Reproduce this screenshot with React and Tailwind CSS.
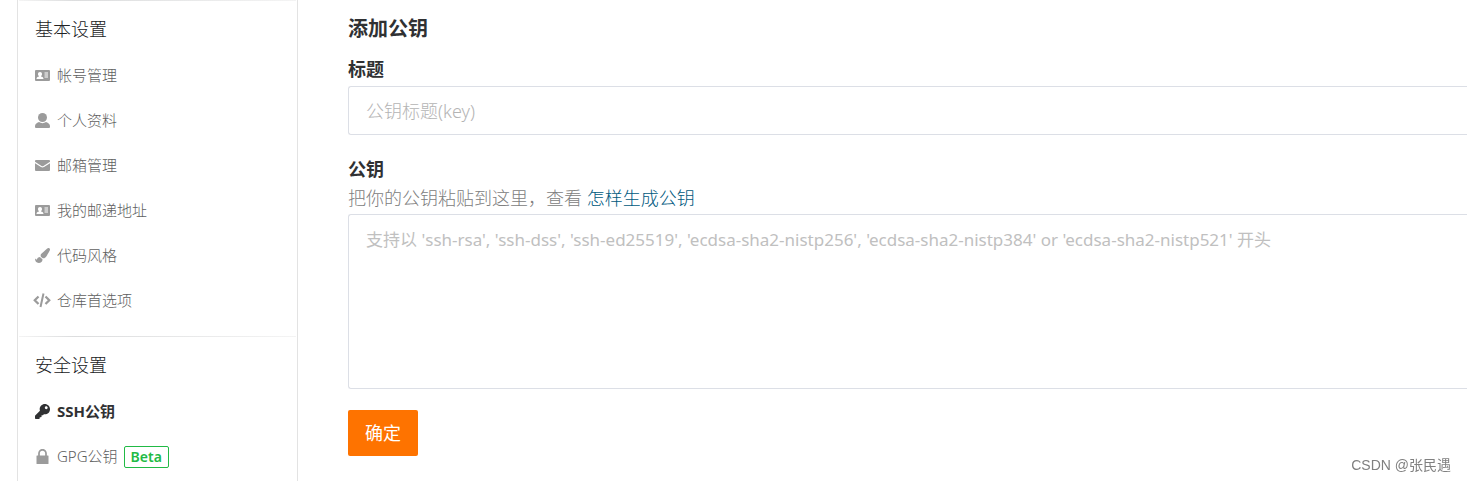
import { FaKey, FaPaintBrush } from 'react-icons/fa';

function CardIcon() {
  return (
    <svg viewBox="0 0 30 30" className="size-[15px]" fill="currentColor" fillRule="evenodd" aria-hidden="true">
      <path d="M2 4h26a2 2 0 0 1 2 2v18a2 2 0 0 1-2 2H2a2 2 0 0 1-2-2V6a2 2 0 0 1 2-2zM10 8c-2.4 0-4 1.700-4 4 0 1.800.8 3.400 2 4.200v1C5 18 3 19 3 22h14c0-3-2-4-5-4.800v-1c1.200-.8 2-2.400 2-4.200 0-2.300-1.600-4-4-4zM19 9v2h7V9zM19 13v2h7v-2zM19 17v2h7v-2z" />
    </svg>
  );
}

function UserIcon() {
  return (
    <svg viewBox="0 0 30 30" className="size-[15px]" fill="currentColor" aria-hidden="true">
      <circle cx="15" cy="9" r="9" />
      <path d="M8 18c4 3 10 3 14 0 5 1.500 8 4.500 8 8.500v1.500a2 2 0 0 1-2 2H2a2 2 0 0 1-2-2v-1.500C0 22.500 3 19.500 8 18z" />
    </svg>
  );
}

function EnvelopeIcon() {
  return (
    <svg viewBox="0 0 30 30" className="size-[15px]" fill="currentColor" aria-hidden="true">
      <path d="M2 4h26a2 2 0 0 1 2 2v1.500L17 16c-1.300.8-2.700.8-4 0L0 7.500V6a2 2 0 0 1 2-2z" />
      <path d="M0 10.500 12 18.200c2 1.200 4 1.200 6 0l12-7.700V24a2 2 0 0 1-2 2H2a2 2 0 0 1-2-2z" />
    </svg>
  );
}

function CodeIcon() {
  return (
    <svg viewBox="0 0 36 30" className="h-[15px] w-[18px]" fill="none" stroke="currentColor" strokeWidth="4.5" aria-hidden="true">
      <path d="M11 7 3.500 14.500 11 22M25 7l7.500 7.500L25 22" />
      <path d="M21 1 15 28" strokeWidth="4" />
    </svg>
  );
}

function LockIcon() {
  return (
    <svg viewBox="0 0 30 30" className="size-[15px]" aria-hidden="true">
      <path d="M8 14V8.500a7 7 0 0 1 14 0V14" fill="none" stroke="currentColor" strokeWidth="3.500" />
      <path d="M4 13h22a1 1 0 0 1 1 1v15a1 1 0 0 1-1 1H4a1 1 0 0 1-1-1V14a1 1 0 0 1 1-1z" fill="currentColor" />
    </svg>
  );
}

function KeyIcon() {
  return <FaKey className="size-[15px]" aria-hidden="true" />;
}

function BrushIcon() {
  return <FaPaintBrush className="size-[15px]" aria-hidden="true" />;
}

const sections = [
  {
    title: '基本设置',
    items: [
      { label: '帐号管理', icon: CardIcon },
      { label: '个人资料', icon: UserIcon },
      { label: '邮箱管理', icon: EnvelopeIcon },
      { label: '我的邮递地址', icon: CardIcon },
      { label: '代码风格', icon: BrushIcon },
      { label: '仓库首选项', icon: CodeIcon },
    ],
  },
  {
    title: '安全设置',
    items: [
      { label: 'SSH公钥', icon: KeyIcon, active: true },
      { label: 'GPG公钥', icon: LockIcon, badge: 'Beta' },
    ],
  },
];

function NavItem({ label, icon: Icon, active, badge }) {
  return (
    <li>
      <a
        href="#"
        aria-current={active ? 'page' : undefined}
        className={
          active
            ? 'flex h-[45px] items-center text-[15px] font-bold text-[#303133]'
            : 'flex h-[45px] items-center text-[15px] font-light text-[#606060]'
        }
      >
        <span
          className={
            active
              ? 'mr-1.5 flex w-[18px] justify-center pb-px text-[#303133]'
              : 'mr-1.5 flex w-[18px] justify-center pb-px text-[#9b9b9b]'
          }
        >
          <Icon />
        </span>
        {label}
        {badge && (
          <span className="ml-1.5 rounded-xs border border-[#21ba45] px-1.5 text-sm leading-5 font-semibold text-[#21ba45]">
            {badge}
          </span>
        )}
      </a>
    </li>
  );
}

function Sidebar() {
  return (
    <nav className="ml-[17px] w-[281px] shrink-0 border-x border-[#e3e3e3]">
      {sections.map((section) => (
        <section key={section.title} className="pb-[13px] last:pb-0">
          <div className="mx-px h-px bg-linear-to-r from-[#f4f4f4] via-[#dcddde] via-20% to-[#f4f4f4]" />
          <h2 className="flex h-[52px] items-center px-[17px] pt-1 text-lg font-light text-[#202123]">{section.title}</h2>
          <ul className="px-[15px]">
            {section.items.map((item) => (
              <NavItem key={item.label} {...item} />
            ))}
          </ul>
        </section>
      ))}
    </nav>
  );
}

export default function App() {
  return (
    <div className="flex min-h-screen overflow-hidden bg-white font-['Noto_Sans','Noto_Sans_CJK_SC',sans-serif] text-[#303133]">
      <Sidebar />
      <main className="min-w-0 flex-1 pt-[15px] pl-[50px]">
        <h1 className="text-xl leading-7 font-bold">添加公钥</h1>
        <form className="flex flex-col" onSubmit={(e) => e.preventDefault()}>
          <label htmlFor="key-title" className="mt-3 text-lg leading-7 font-bold">标题</label>
          <input
            id="key-title"
            type="text"
            placeholder="公钥标题(key)"
            className="mt-[3px] h-[49px] rounded-l-[3px] border border-r-0 border-[#dcdfe6] px-[17px] text-lg font-light outline-none placeholder:text-[#b4b4b4]"
          />
          <label htmlFor="key-body" className="mt-5 text-lg leading-7 font-bold">公钥</label>
          <p className="text-lg leading-[31px] font-light text-[#808080]">
            把你的公钥粘贴到这里，查看 <a href="#" className="text-[#005980]">怎样生成公钥</a>
          </p>
          <textarea
            id="key-body"
            placeholder="支持以 'ssh-rsa', 'ssh-dss', 'ssh-ed25519', 'ecdsa-sha2-nistp256', 'ecdsa-sha2-nistp384' or 'ecdsa-sha2-nistp521' 开头"
            className="h-[175px] resize-none rounded-l-[3px] border border-r-0 border-[#dcdfe6] px-[17px] py-3 text-[17px] leading-[26px] outline-none placeholder:text-[#c0c0c0]"
          />
          <button type="submit" className="mt-[21px] h-[46px] self-start rounded-xs bg-[#fe7300] px-[17px] text-lg text-white">
            确定
          </button>
        </form>
      </main>
      <p className="fixed right-4 bottom-2 font-['Liberation_Sans','Noto_Sans_CJK_SC',sans-serif] text-sm leading-4 text-[#808080]">
        CSDN @张民遇
      </p>
    </div>
  );
}
